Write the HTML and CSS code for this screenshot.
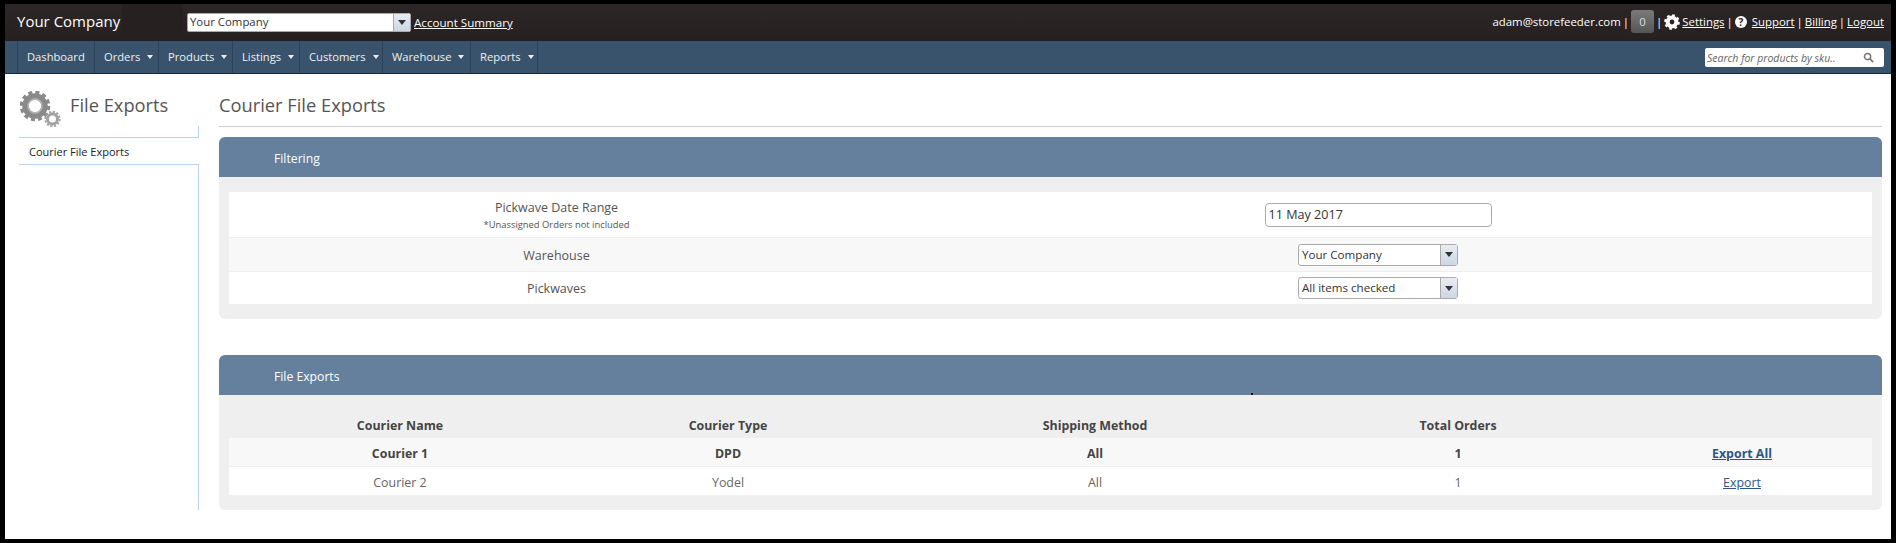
FILE: index.html
```html
<!DOCTYPE html>
<html lang="en">
<head>
<meta charset="utf-8">
<title>Courier File Exports</title>
<link rel="stylesheet" href="styles.css">
</head>
<body>
<div class="frame">
  <header class="topbar">
    <div class="brand">Your Company</div>
    <div class="logo-patch"></div>
    <div class="combo combo-top"><span class="combo-text">Your Company</span><span class="combo-btn"><i class="caret"></i></span></div>
    <a class="top-link summary" href="#">Account Summary</a>
    <div class="user">
      <span>adam@storefeeder.com</span><span class="pipe">|</span>
      <span class="badge">0</span><span class="pipe">|</span>
      <svg class="cog" viewBox="0 0 20 20"><circle cx="10" cy="10" r="5.5" fill="none" stroke="#fff" stroke-width="5"/><circle cx="10" cy="10" r="8.6" fill="none" stroke="#fff" stroke-width="2.4" stroke-dasharray="3.4 3.35"/></svg>
      <a class="top-link" href="#">Settings</a><span class="pipe">|</span>
      <span class="help">?</span>
      <a class="top-link" href="#">Support</a><span class="pipe">|</span>
      <a class="top-link" href="#">Billing</a><span class="pipe">|</span>
      <a class="top-link" href="#">Logout</a>
    </div>
  </header>
  <nav class="navbar">
    <ul class="menu">
      <li>Dashboard</li>
      <li>Orders<i class="arrow"></i></li>
      <li>Products<i class="arrow"></i></li>
      <li>Listings<i class="arrow"></i></li>
      <li>Customers<i class="arrow"></i></li>
      <li>Warehouse<i class="arrow"></i></li>
      <li>Reports<i class="arrow"></i></li>
    </ul>
    <div class="search">
      <span class="search-text">Search for products by sku..</span>
      <svg class="lens" viewBox="0 0 12 12"><circle cx="5" cy="5" r="3.4" fill="none" stroke="#777" stroke-width="1.6"/><path d="M7.6 7.6 11 11" stroke="#777" stroke-width="2"/></svg>
    </div>
  </nav>
  <div class="content">
    <aside class="sidebar">
      <div class="side-head">
        <svg class="gears" viewBox="0 0 41 37">
          <circle cx="15" cy="15" r="9.5" fill="none" stroke="#8a8a8a" stroke-width="6.5"/>
          <circle cx="15" cy="15" r="13.6" fill="none" stroke="#8a8a8a" stroke-width="3.4" stroke-dasharray="4 3.12"/>
          <circle cx="15" cy="15" r="7" fill="none" stroke="#b5b5b5" stroke-width="1.5"/>
          <circle cx="32.5" cy="28" r="5" fill="none" stroke="#a2a2a2" stroke-width="3"/>
          <circle cx="32.5" cy="28" r="7.2" fill="none" stroke="#a2a2a2" stroke-width="2" stroke-dasharray="2.2 1.57"/>
        </svg>
        <h2 class="side-title">File Exports</h2>
      </div>
      <div class="side-tail side-tail-short"></div>
      <div class="side-item">Courier File Exports</div>
      <div class="side-tail side-tail-long"></div>
    </aside>
    <main class="main">
      <h1 class="page-title">Courier File Exports</h1>
      <section class="panel">
        <div class="panel-head">Filtering</div>
        <div class="panel-body">
          <div class="frow frow-date">
            <div class="flabel">Pickwave Date Range<small class="note">*Unassigned Orders not included</small></div>
            <div class="fvalue"><input class="date" type="text" value="11 May 2017"></div>
          </div>
          <div class="frow frow-alt">
            <div class="flabel">Warehouse</div>
            <div class="fvalue"><div class="combo combo-form"><span class="combo-text">Your Company</span><span class="combo-btn"><i class="caret"></i></span></div></div>
          </div>
          <div class="frow frow-last">
            <div class="flabel">Pickwaves</div>
            <div class="fvalue"><div class="combo combo-form"><span class="combo-text">All items checked</span><span class="combo-btn"><i class="caret"></i></span></div></div>
          </div>
        </div>
      </section>
      <section class="panel panel-exports">
        <div class="panel-head">File Exports<i class="speck"></i></div>
        <div class="panel-body">
          <div class="trow thead"><div>Courier Name</div><div>Courier Type</div><div>Shipping Method</div><div>Total Orders</div><div></div></div>
          <div class="trow tbold"><div>Courier 1</div><div>DPD</div><div>All</div><div>1</div><div><a href="#">Export All</a></div></div>
          <div class="trow tplain"><div>Courier 2</div><div>Yodel</div><div>All</div><div>1</div><div><a href="#">Export</a></div></div>
        </div>
      </section>
    </main>
  </div>
</div>
</body>
</html>
```
FILE: styles.css
```css
* { box-sizing: border-box; }
html, body { margin: 0; padding: 0; background: #000; }
body { font-family: "Open Sans", "Noto Sans", sans-serif; color: #555; }
.frame { height: 543px; border: solid #000; border-width: 4px 5px; background: #fff; overflow: hidden; }

.topbar { height: 37px; display: flex; align-items: flex-start; background: linear-gradient(#2c2726, #262120); color: #fff; }
.brand { width: 117px; padding: 7px 0 0 12px; font-size: 15px; line-height: 20px; white-space: nowrap; }
.logo-patch { width: 61px; height: 33px; background: #262120; }
.combo { display: flex; background: #fff; border: 1px solid #aaa; border-radius: 2px; color: #333; }
.combo-text { flex: 1; white-space: nowrap; overflow: hidden; }
.combo-btn { width: 17px; display: flex; align-items: center; justify-content: center; background: linear-gradient(#e9edf3, #cdd6e3); border-left: 1px solid #aaa; }
.caret { width: 0; height: 0; border: 4px solid transparent; border-top: 5px solid #333; border-bottom: 0; }
.combo-top { width: 224px; height: 19px; margin: 9px 0 0 4px; font-size: 11.4px; line-height: 16px; }
.combo-top .combo-text { padding-left: 2px; }
.top-link { color: #fff; text-decoration: underline; white-space: nowrap; }
.summary { margin: 10px 0 0 3px; font-size: 11.6px; line-height: 18px; }
.user { margin-left: auto; padding: 6px 7px 0 0; display: flex; align-items: center; font-size: 11.4px; line-height: 23px; white-space: nowrap; }
.pipe { margin: 0 2px; }
.badge { width: 23px; height: 23px; text-align: center; background: linear-gradient(#7a7a7a, #565656); border-radius: 3px; color: #ddd; }
.cog { width: 16px; height: 16px; margin: 0 2px 0 0; }
.help { width: 12px; height: 12px; margin: 0 5px 0 0; border-radius: 50%; background: #fff; color: #262120; font-size: 10px; font-weight: 700; line-height: 12px; text-align: center; }

.navbar { height: 33px; display: flex; justify-content: space-between; align-items: flex-start; background: #39536c; border-bottom: 1px solid #14263a; color: #f0f0f0; }
.menu { list-style: none; margin: 0 0 0 12px; padding: 0; height: 32px; display: grid; grid-template-columns: 77px 64px 74px 67px 83px 88px 68px; font-size: 11.2px; line-height: 32px; }
.menu li { padding-left: 9px; border-left: 1px solid #2b4259; white-space: nowrap; }
.menu li:last-child { border-right: 1px solid #2b4259; }
.arrow { display: inline-block; width: 0; height: 0; margin: 0 0 2px 7px; border: 3px solid transparent; border-top: 4px solid #eee; border-bottom: 0; }
.search { width: 179px; height: 19px; margin: 7px 7px 0 0; padding: 0 10px 0 2px; display: flex; align-items: center; justify-content: space-between; background: #fff; border-radius: 2px; }
.search-text { font-size: 10.5px; font-style: italic; color: #666; white-space: nowrap; }
.lens { width: 11px; height: 11px; }

.content { height: 465px; display: flex; padding: 0 9px 0 14px; }
.sidebar { width: 180px; height: 436px; display: flex; flex-direction: column; }
.side-head { height: 52px; display: flex; align-items: flex-start; }
.gears { width: 41px; height: 37px; margin-top: 17px; margin-left: 1px; }
.side-title { margin: 17px 0 0 9px; font-size: 18.3px; line-height: 28px; font-weight: 400; color: #555; white-space: nowrap; }
.side-tail { border-right: 1px solid #b9d5f2; }
.side-tail-short { height: 11px; }
.side-tail-long { flex: 1; }
.side-item { height: 28px; padding-left: 10px; border-top: 1px solid #b9d5f2; border-bottom: 1px solid #b9d5f2; font-size: 11px; line-height: 27px; color: #222; white-space: nowrap; }

.main { flex: 1; margin-left: 20px; }
.page-title { height: 53px; margin: 0 0 10px; padding-top: 17px; border-bottom: 1px solid #ccc; font-size: 18.3px; line-height: 28px; font-weight: 400; color: #555; white-space: nowrap; }
.panel { background: #efefef; border-radius: 6px; overflow: hidden; }
.panel-exports { margin-top: 36px; }
.panel-head { position: relative; height: 40px; padding-left: 55px; background: #65809c; color: #fff; font-size: 12.2px; line-height: 44px; }
.speck { position: absolute; left: 1032px; top: 38px; width: 2px; height: 2px; background: #111; }
.panel-body { padding: 15px 10px; }

.frow { display: grid; grid-template-columns: 655px 1fr; align-items: center; background: #fff; border-bottom: 1px solid #eee; font-size: 12.5px; }
.frow-date { height: 46px; }
.frow-alt { height: 34px; background: #f8f8f8; }
.frow-last { height: 32px; border-bottom: 0; }
.flabel { text-align: center; line-height: 18px; color: #555; }
.frow-date .flabel { padding-top: 1px; }
.frow-alt .flabel, .frow-last .flabel { padding-top: 2px; }
.note { display: block; margin-top: 1px; font-size: 9.4px; line-height: 14px; }
.fvalue { display: flex; justify-content: center; }
.date { width: 227px; height: 24px; padding: 0 3px; border: 1px solid #aaa; border-radius: 4px; background: #fff; color: #333; font-family: inherit; font-size: 12.6px; }
.combo-form { width: 160px; height: 22px; font-size: 11.6px; line-height: 20px; border-radius: 3px; }
.combo-form .combo-text { padding-left: 3px; }

.trow { display: grid; grid-template-columns: 342px 314px 420px 306px 1fr; text-align: center; font-size: 12.4px; }
.trow a { color: #2a5788; text-decoration: underline; }
.trow > div:last-child { padding-left: 1px; }
.thead { height: 28px; font-weight: 700; line-height: 32px; color: #444; }
.tbold { height: 29px; background: #f8f8f8; border-bottom: 1px solid #eee; font-weight: 700; line-height: 31px; color: #444; }
.tplain { height: 28px; background: #fff; line-height: 31px; color: #666; }
```
